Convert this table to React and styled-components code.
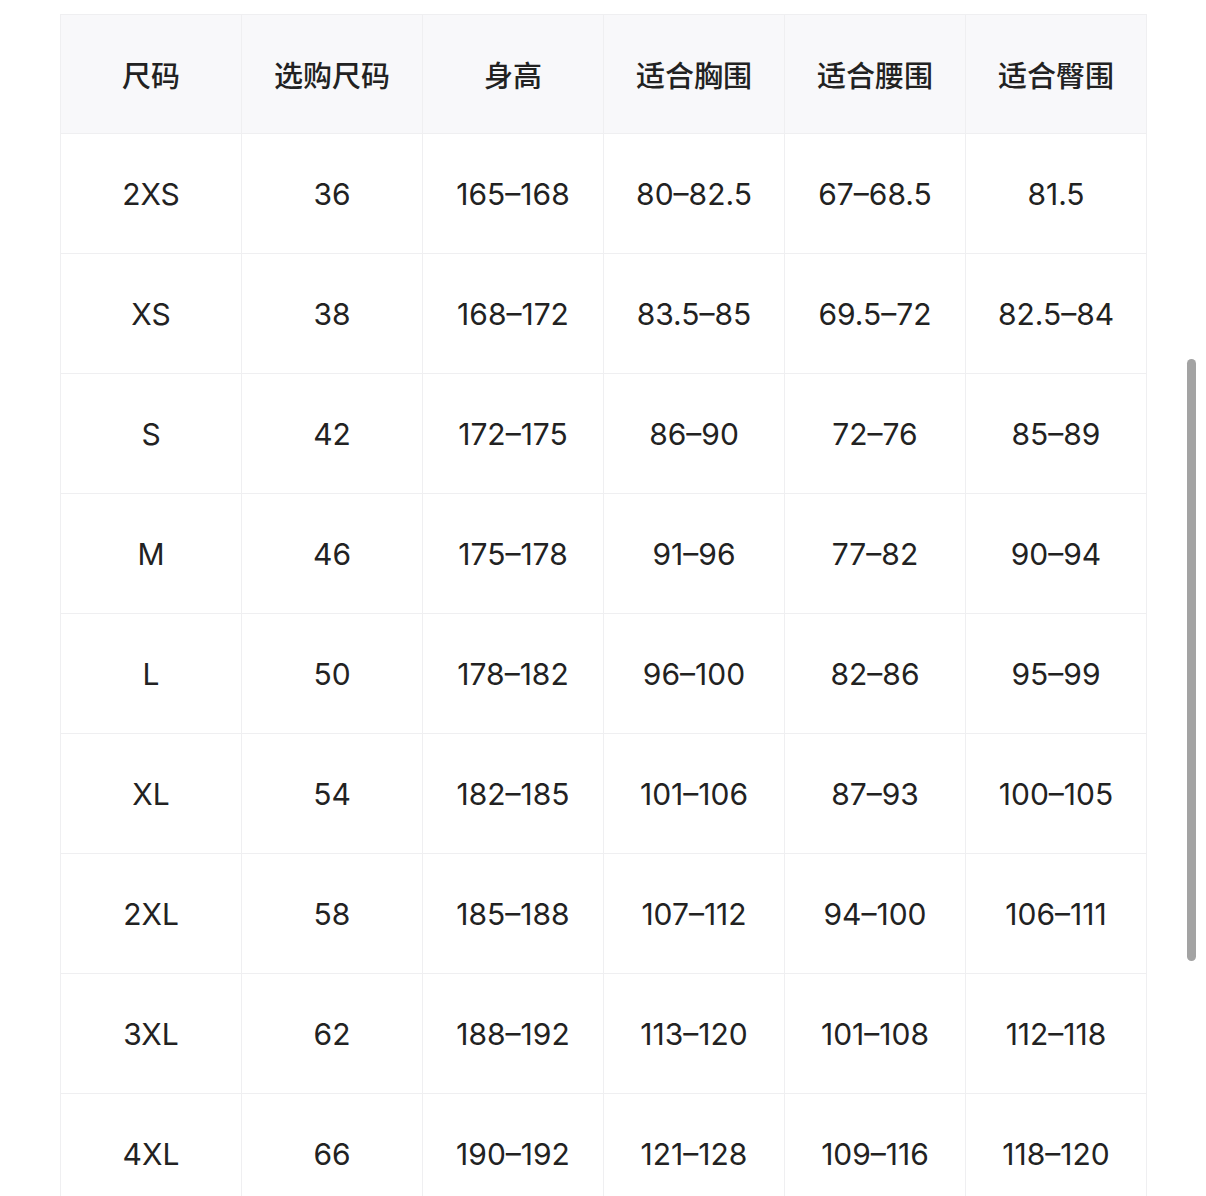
import styled, { createGlobalStyle } from 'styled-components';

const GlobalStyle = createGlobalStyle`
  html, body {
    margin: 0;
    background: #fff;
    overflow: hidden;
  }
  body {
    font-family: Inter, "Noto Sans CJK SC", sans-serif;
    color: #222;
  }
`;

const headers = ['尺码', '选购尺码', '身高', '适合胸围', '适合腰围', '适合臀围'];

const rows = [
  ['2XS', '36', '165–168', '80–82.5', '67–68.5', '81.5'],
  ['XS', '38', '168–172', '83.5–85', '69.5–72', '82.5–84'],
  ['S', '42', '172–175', '86–90', '72–76', '85–89'],
  ['M', '46', '175–178', '91–96', '77–82', '90–94'],
  ['L', '50', '178–182', '96–100', '82–86', '95–99'],
  ['XL', '54', '182–185', '101–106', '87–93', '100–105'],
  ['2XL', '58', '185–188', '107–112', '94–100', '106–111'],
  ['3XL', '62', '188–192', '113–120', '101–108', '112–118'],
  ['4XL', '66', '190–192', '121–128', '109–116', '118–120'],
];

const Page = styled.div`
  position: relative;
  height: 1196px;
  padding: 14px 0 0 60px;
  box-sizing: border-box;
`;

const Table = styled.div`
  width: 1086px;
  display: grid;
  grid-template-columns: repeat(6, 181px);
  border-top: 1px solid #efeff1;
  border-left: 1px solid #efeff1;
`;

const Cell = styled.div`
  height: ${(p) => (p.$head ? '119px' : '120px')};
  box-sizing: border-box;
  display: flex;
  align-items: center;
  justify-content: center;
  border-right: 1px solid #efeff1;
  border-bottom: 1px solid #efeff1;
  background: ${(p) => (p.$head ? '#f8f8fa' : '#fff')};
  font-size: ${(p) => (p.$head ? '29px' : '30px')};
  font-weight: ${(p) => (p.$head ? 500 : 400)};
  font-family: ${(p) =>
    p.$head ? '"Noto Sans CJK SC", sans-serif' : 'Inter, "Noto Sans CJK SC", sans-serif'};
  color: #222;
`;

const Scrollbar = styled.div`
  position: absolute;
  left: 1187px;
  top: 359px;
  width: 9px;
  height: 602px;
  border-radius: 5px;
  background: #a3a3a3;
`;

function App() {
  return (
    <Page>
      <GlobalStyle />
      <Table>
        {headers.map((h) => (
          <Cell key={h} $head>{h}</Cell>
        ))}
        {rows.map((r) =>
          r.map((v, i) => <Cell key={r[0] + i}>{v}</Cell>)
        )}
      </Table>
      <Scrollbar />
    </Page>
  );
}

export default App;
